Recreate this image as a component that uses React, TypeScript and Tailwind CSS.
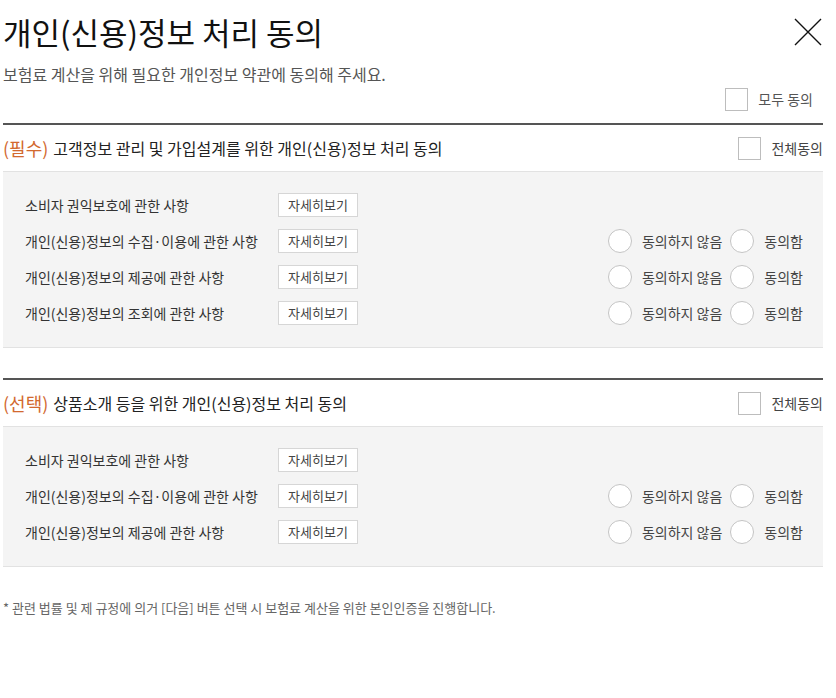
import React from "react";

type Item = { label: string; choice: boolean };

const required: Item[] = [
  { label: "소비자 권익보호에 관한 사항", choice: false },
  { label: "개인(신용)정보의 수집·이용에 관한 사항", choice: true },
  { label: "개인(신용)정보의 제공에 관한 사항", choice: true },
  { label: "개인(신용)정보의 조회에 관한 사항", choice: true },
];

const optional: Item[] = [
  { label: "소비자 권익보호에 관한 사항", choice: false },
  { label: "개인(신용)정보의 수집·이용에 관한 사항", choice: true },
  { label: "개인(신용)정보의 제공에 관한 사항", choice: true },
];

function Box() {
  return <span className="w-[23px] h-[23px] border border-[#bdbdbd] bg-white inline-block" />;
}

function Radio({ text }: { text: string }) {
  return (
    <label className="flex items-center gap-[10px]">
      <span className="w-[24px] h-[24px] rounded-full border border-[#c4c4c4] bg-white inline-block" />
      <span className="text-[14px] text-[#444]">{text}</span>
    </label>
  );
}

function Section({ tag, title, items }: { tag: string; title: string; items: Item[] }) {
  return (
    <section className="border-t-2 border-[#555]">
      <div className="h-[46px] flex items-center justify-between">
        <h2 className="text-[16px] text-[#222] flex items-center">
          <span className="text-[18px] text-[#d2692f] mr-[5px]">({tag})</span>
          {title}
        </h2>
        <div className="flex items-center gap-[10px]">
          <Box />
          <span className="text-[14px] text-[#444]">전체동의</span>
        </div>
      </div>
      <div className="bg-[#f4f4f4] border-t border-b border-[#e2e2e2] pt-[21px] pb-[22px] pl-[22px] pr-[20px] flex flex-col gap-[12px]">
        {items.map((it, i) => (
          <div key={i} className="h-[24px] flex items-center">
            <span className="w-[253px] text-[14px] text-[#333]">{it.label}</span>
            <button className="w-[80px] h-[24px] bg-white border border-[#d6d6d6] text-[13px] text-[#444]">
              자세히보기
            </button>
            {it.choice && (
              <div className="ml-auto flex items-center gap-[8px]">
                <Radio text="동의하지 않음" />
                <Radio text="동의함" />
              </div>
            )}
          </div>
        ))}
      </div>
    </section>
  );
}

export default function App() {
  return (
    <div
      className="w-[836px] h-[698px] bg-white pl-[3px] pr-[13px] pt-[10px]"
      style={{ fontFamily: '"Noto Sans CJK KR", "Noto Sans", sans-serif' }}
    >
      <div className="flex items-start justify-between">
        <h1 className="text-[31px] leading-[44px] text-[#111]">개인(신용)정보 처리 동의</h1>
        <button className="mt-[8px] mr-[1px]" aria-label="닫기">
          <svg width="28" height="28" viewBox="0 0 28 28" stroke="#111" strokeWidth="1.4">
            <path d="M1 1L27 27M27 1L1 27" />
          </svg>
        </button>
      </div>
      <p className="mt-[8px] text-[16px] leading-[24px] text-[#555]">
        보험료 계산을 위해 필요한 개인정보 약관에 동의해 주세요.
      </p>
      <div className="flex justify-end items-center gap-[10px] mt-[2px] mb-[12px] pr-[10px]">
        <Box />
        <span className="text-[14px] text-[#555]">모두 동의</span>
      </div>
      <Section tag="필수" title="고객정보 관리 및 가입설계를 위한 개인(신용)정보 처리 동의" items={required} />
      <div className="h-[30px]" />
      <Section tag="선택" title="상품소개 등을 위한 개인(신용)정보 처리 동의" items={optional} />
      <p className="mt-[31px] text-[13px] text-[#666]">
        * 관련 법률 및 제 규정에 의거 [다음] 버튼 선택 시 보험료 계산을 위한 본인인증을 진행합니다.
      </p>
    </div>
  );
}
